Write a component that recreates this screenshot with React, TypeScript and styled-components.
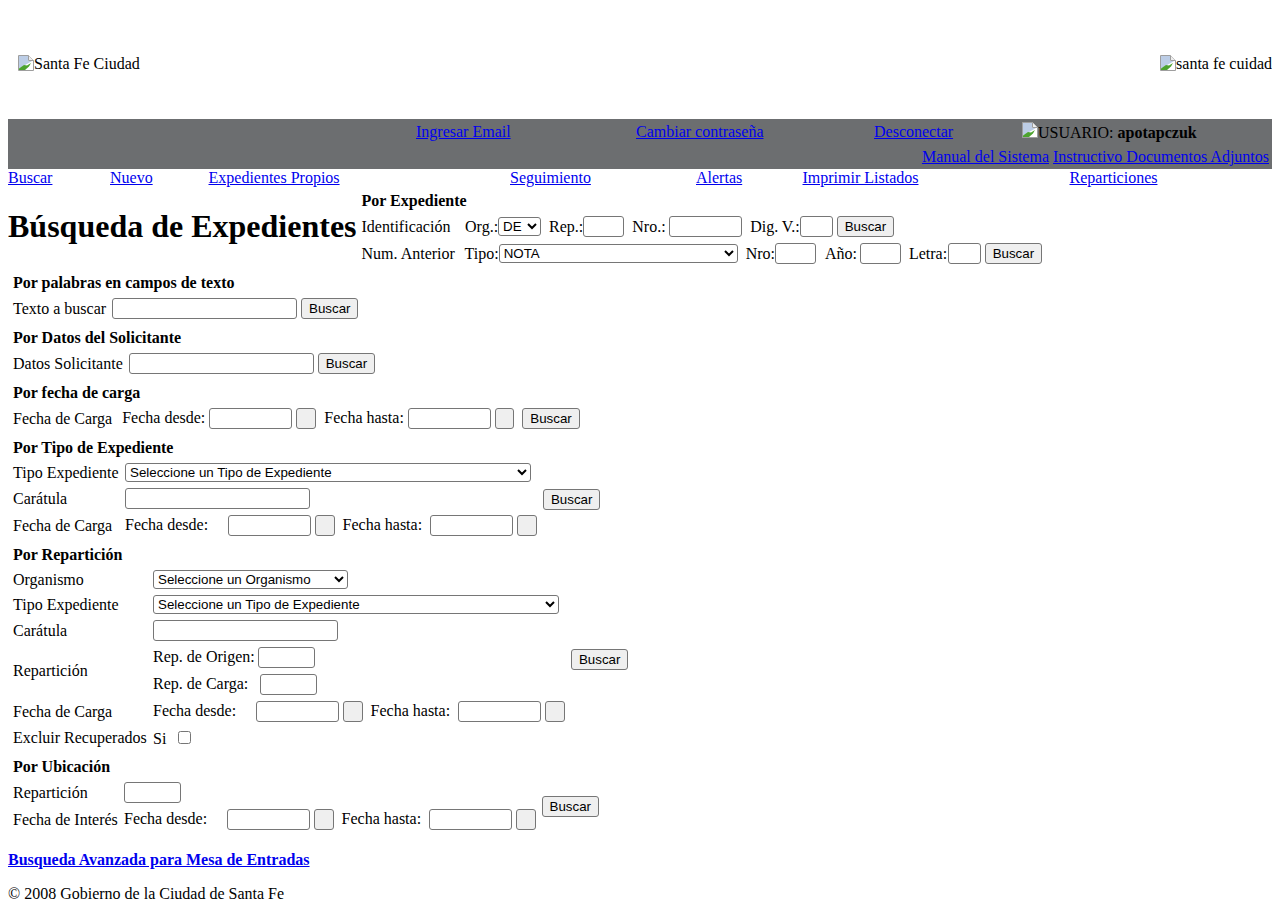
import React from 'react'
import styled, { createGlobalStyle } from 'styled-components'

const GlobalStyle = createGlobalStyle`
  body {
    margin: 8px;
    background: #fff;
    color: #000;
    font-family: "Liberation Serif", "Times New Roman", serif;
    font-size: 16px;
  }
  a {
    color: #0000ee;
  }
`

const Page = styled.div`
  display: flex;
  flex-direction: column;
`

const LogoRow = styled.div`
  display: flex;
  justify-content: space-between;
  align-items: center;
  height: 111px;
  padding-left: 10px;
`

const BrokenImage = styled.span`
  display: inline-flex;
  align-items: flex-start;
  line-height: 18px;
`

const UserBar = styled.div`
  display: flex;
  flex-direction: column;
  height: 50px;
  background: #6c6e70;
`

const BarTop = styled.div`
  display: grid;
  grid-template-columns: 408px 220px 238px 148px 1fr;
  height: 28px;
  padding-top: 4px;
  box-sizing: border-box;
`

const BarBottom = styled.div`
  display: flex;
  justify-content: flex-end;
  gap: 4px;
  padding: 1px 3px 0 0;
`

const BarLink = styled.a<{ $start: number }>`
  grid-column: ${({ $start }) => $start};
  justify-self: start;
`

const UserName = styled.span`
  grid-column: 5;
  display: inline-flex;
  align-items: flex-start;
  line-height: 18px;
  padding-top: 1px;

  svg {
    margin-top: -2px;
  }
`

const NavRow = styled.nav`
  display: grid;
  grid-template-columns: 102px 98.5px 301.5px 186px 106.5px 267px 1fr;
  height: 18px;
  line-height: 18px;
`

const TitleRow = styled.div`
  display: flex;
  align-items: center;
  gap: 5px;
`

const Title = styled.h1`
  margin: 0 0 2px;
  font-size: 32px;
  font-weight: bold;
  white-space: nowrap;
  line-height: 37px;
`

const Block = styled.div`
  display: flex;
  flex-direction: column;
`

const Sections = styled.div`
  display: flex;
  flex-direction: column;
  padding: 0 5px;
`

const SectionTitle = styled.div<{ $first?: boolean }>`
  font-weight: bold;
  line-height: 18px;
  box-sizing: border-box;
  height: ${({ $first }) => ($first ? 26 : 28)}px;
  padding-top: ${({ $first }) => ($first ? 5 : 7)}px;
`

const Row = styled.div<{ $height?: number; $cols?: string }>`
  display: grid;
  grid-template-columns: ${({ $cols }) => $cols ?? 'auto auto 1fr'};
  justify-content: start;
  align-items: center;
  height: ${({ $height }) => $height ?? 27}px;
  white-space: nowrap;
`

const TwoRowGrid = styled.div`
  display: grid;
  grid-template-columns: 111px auto auto;
  grid-template-rows: 27px 27px;
  justify-content: start;
  justify-items: start;
  align-items: center;
  white-space: nowrap;
`

const Inline = styled.span<{ $gap?: number }>`
  display: flex;
  align-items: center;
  gap: ${({ $gap }) => $gap ?? 4}px;
`

const Caption = styled.span`
  padding-bottom: 2px;
`

const CheckCaption = styled.span`
  padding-top: 2px;
`

const Spacer = styled.span<{ $w: number }>`
  display: inline-block;
  width: ${({ $w }) => $w}px;
`

const TextBox = styled.input<{ $w: number }>`
  box-sizing: border-box;
  width: ${({ $w }) => $w}px;
  height: 21px;
  margin: 0;
  padding: 1px 2px;
  border: 1px solid #767676;
  border-radius: 3px;
  background: #fff;
`

const Combo = styled.select<{ $w: number }>`
  box-sizing: border-box;
  width: ${({ $w }) => $w}px;
  height: 19px;
  margin: 0;
  border: 1px solid #767676;
  border-radius: 3px;
  background: #fff;
  color: #000;
  font-family: "Liberation Sans", Arial, sans-serif;
  font-size: 13.33px;
`

const Button = styled.button<{ $lift?: number; $drop?: number }>`
  box-sizing: border-box;
  width: 57.4px;
  height: 21px;
  margin: ${({ $drop }) => $drop ?? 0}px 0 ${({ $lift }) => $lift ?? 0}px;
  padding: 1px 6px;
  border: 1px solid #767676;
  border-radius: 3px;
  background: #efefef;
  color: #000;
  font-family: "Liberation Sans", Arial, sans-serif;
  font-size: 13.33px;
`

const CalendarButton = styled(Button)`
  width: 19.5px;
  padding: 0;
`

const SideButton = styled(Button)`
  grid-column: 3;
  grid-row: 1 / 3;
  margin: 0 0 -1px 6px;
`

const Check = styled.input`
  width: 13px;
  height: 13px;
  margin: 0 0 1px 12px;
`

const AdvancedLink = styled.a`
  font-weight: bold;
`

const AdvancedRow = styled.div`
  margin-top: 18px;
  line-height: 18px;
`

const Footer = styled.div`
  margin-top: 16px;
  line-height: 18px;
`

// the browser's placeholder for an image that did not load
const MissingIcon = () => (
  <svg width="16" height="16" viewBox="0 0 16 16" aria-hidden="true">
    <path d="M0.5 0.5H10.5L15.5 5.5V15.5H0.5Z" fill="#fff" stroke="#9e9e9e" />
    <path d="M10.5 0.5V5.5H15.5" fill="#eee" stroke="#9e9e9e" />
    <path d="M1 1H10V6H14L2 13H1Z" fill="#bccde6" />
    <path d="M1 15V13.5L6 10L9 10.5L13 8L11 11.5L7 15Z" fill="#4da32f" />
  </svg>
)

const DateRange = ({ wide }: { wide?: boolean }) => (
  <Inline>
    <Caption>Fecha desde:</Caption>
    {wide && <Spacer $w={12} />}
    <TextBox $w={83} />
    <CalendarButton type="button" />
    <Spacer $w={wide ? 0 : 0.5} />
    <Caption>Fecha hasta:</Caption>
    {wide && <Spacer $w={0} />}
    <TextBox $w={83} />
    <CalendarButton type="button" />
  </Inline>
)

export default function App() {
  return (
    <Page>
      <GlobalStyle />
      <LogoRow>
        <BrokenImage>
          <MissingIcon />
          Santa Fe Ciudad
        </BrokenImage>
        <BrokenImage>
          <MissingIcon />
          santa fe cuidad
        </BrokenImage>
      </LogoRow>

      <UserBar>
        <BarTop>
          <BarLink href="#" $start={2}>Ingresar Email</BarLink>
          <BarLink href="#" $start={3}>Cambiar contraseña</BarLink>
          <BarLink href="#" $start={4}>Desconectar</BarLink>
          <UserName>
            <MissingIcon />
            USUARIO:&nbsp;<b>apotapczuk</b>
          </UserName>
        </BarTop>
        <BarBottom>
          <a href="#">Manual del Sistema</a>
          <a href="#">Instructivo Documentos Adjuntos</a>
        </BarBottom>
      </UserBar>

      <NavRow>
        <a href="#">Buscar</a>
        <a href="#">Nuevo</a>
        <a href="#">Expedientes Propios</a>
        <a href="#">Seguimiento</a>
        <a href="#">Alertas</a>
        <a href="#">Imprimir Listados</a>
        <a href="#">Reparticiones</a>
      </NavRow>

      <TitleRow>
        <Title>Búsqueda de Expedientes</Title>
        <Block>
          <SectionTitle $first>Por Expediente</SectionTitle>
          <Row $cols="103.5px auto">
            Identificación
            <Inline $gap={0}>
              Org.:
              <Combo $w={43} defaultValue="DE"><option>DE</option></Combo>
              <Spacer $w={8} />Rep.:
              <TextBox $w={41} />
              <Spacer $w={8} />Nro.:
              <Spacer $w={3.5} />
              <TextBox $w={73} />
              <Spacer $w={8} />Dig. V.:
              <TextBox $w={33} />
              <Spacer $w={4} />
              <Button type="button">Buscar</Button>
            </Inline>
          </Row>
          <Row $cols="103px auto">
            Num. Anterior
            <Inline $gap={0}>
              Tipo:
              <Combo $w={239}><option>NOTA</option></Combo>
              <Spacer $w={8} />Nro:
              <TextBox $w={41} />
              <Spacer $w={9} />Año:
              <Spacer $w={3} />
              <TextBox $w={41} />
              <Spacer $w={8} />Letra:
              <Spacer $w={0.5} />
              <TextBox $w={33} />
              <Spacer $w={4} />
              <Button type="button">Buscar</Button>
            </Inline>
          </Row>
        </Block>
      </TitleRow>

      <Sections>
        <SectionTitle>Por palabras en campos de texto</SectionTitle>
        <Row>
          Texto a buscar
          <Inline>
            <Spacer $w={2} />
            <TextBox $w={185} />
            <Button type="button">Buscar</Button>
          </Inline>
        </Row>

        <SectionTitle>Por Datos del Solicitante</SectionTitle>
        <Row>
          Datos Solicitante
          <Inline>
            <Spacer $w={2} />
            <TextBox $w={185} />
            <Button type="button">Buscar</Button>
          </Inline>
        </Row>

        <SectionTitle>Por fecha de carga</SectionTitle>
        <Row>
          Fecha de Carga
          <Inline>
            <Spacer $w={6} />
            <DateRange />
            <Spacer $w={0} />
            <Button type="button">Buscar</Button>
          </Inline>
        </Row>

        <SectionTitle>Por Tipo de Expediente</SectionTitle>
        <Row $height={25} $cols="112px auto">
          Tipo Expediente
          <Combo $w={406}><option>Seleccione un Tipo de Expediente</option></Combo>
        </Row>
        <Row $cols="112px 418px auto">
          Carátula
          <TextBox $w={185} />
          <Button type="button" $drop={2}>Buscar</Button>
        </Row>
        <Row $cols="112px auto">
          Fecha de Carga
          <DateRange wide />
        </Row>

        <SectionTitle>Por Repartición</SectionTitle>
        <Row $height={25} $cols="140px auto">
          Organismo
          <Combo $w={195}><option>Seleccione un Organismo</option></Combo>
        </Row>
        <Row $height={25} $cols="140px auto">
          Tipo Expediente
          <Combo $w={406}><option>Seleccione un Tipo de Expediente</option></Combo>
        </Row>
        <Row $cols="140px auto">
          Carátula
          <TextBox $w={185} />
        </Row>
        <Row $height={54} $cols="140px 418px auto">
          Repartición
          <Block>
            <Row>
              <Inline $gap={3}><Caption>Rep. de Origen:</Caption><TextBox $w={57} /></Inline>
            </Row>
            <Row>
              <Inline><Caption>Rep. de Carga:</Caption><Spacer $w={4} /><TextBox $w={57} /></Inline>
            </Row>
          </Block>
          <Button type="button" $lift={23}>Buscar</Button>
        </Row>
        <Row $cols="140px auto">
          Fecha de Carga
          <DateRange wide />
        </Row>
        <Row $height={26} $cols="140px auto">
          Excluir Recuperados
          <Inline $gap={0}>
            <CheckCaption>Si</CheckCaption>
            <Check type="checkbox" />
          </Inline>
        </Row>

        <SectionTitle>Por Ubicación</SectionTitle>
        <TwoRowGrid>
          <div>Repartición</div>
          <TextBox $w={57} />
          <SideButton type="button">Buscar</SideButton>
          <div>Fecha de Interés</div>
          <DateRange wide />
        </TwoRowGrid>
      </Sections>

      <AdvancedRow>
        <AdvancedLink href="#">Busqueda Avanzada para Mesa de Entradas</AdvancedLink>
      </AdvancedRow>
      <Footer>© 2008 Gobierno de la Ciudad de Santa Fe</Footer>
    </Page>
  )
}
